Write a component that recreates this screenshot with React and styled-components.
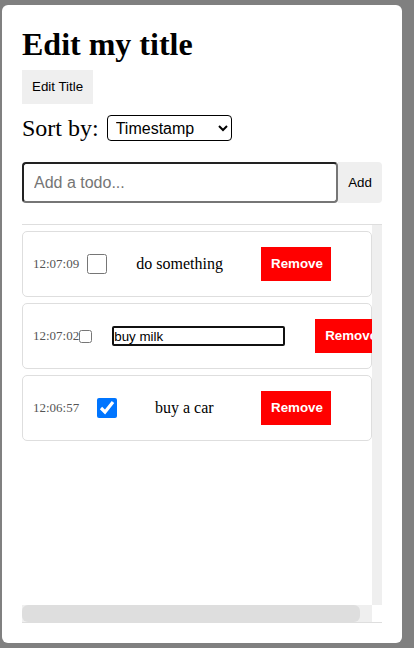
import React, { useState } from "react";
import styled, { createGlobalStyle } from "styled-components";

const GlobalStyle = createGlobalStyle`
  html, body {
    margin: 0;
    padding: 0;
    background: #808080;
  }
  body {
    padding: 5px 0 5px 2px;
    font-family: "Liberation Serif", "Times New Roman", serif;
  }
`;

const Card = styled.div`
  box-sizing: border-box;
  width: 400px;
  height: 638px;
  background: white;
  border-radius: 6px;
  padding: 21px 20px 20px;
  display: flex;
  flex-direction: column;
`;

const Title = styled.h1`
  margin: 0 0 7px;
  font-size: 32px;
  font-weight: bold;
  line-height: 37px;
`;

const GrayButton = styled.button`
  align-self: flex-start;
  border: none;
  background: #efefef;
  font-family: "Liberation Sans", Arial, sans-serif;
  font-size: 13.33px;
  line-height: 14px;
  padding: 10px;
  color: black;
  border-radius: ${(p) => (p.$attached ? "0 4px 4px 0" : "0")};
`;

const SortRow = styled.div`
  display: flex;
  align-items: center;
  gap: 8px;
  margin-top: 10px;
  font-size: 24px;
  line-height: 28px;
`;

const SortSelect = styled.select`
  width: 125px;
  height: 26px;
  font-family: "Liberation Sans", Arial, sans-serif;
  font-size: 16px;
  border: 1px solid black;
  border-radius: 4px;
  background: white;
  color: black;
  padding: 0 4px;
`;

const AddForm = styled.div`
  display: flex;
  margin-top: 20px;
  margin-bottom: 21px;
`;

const TodoInput = styled.input`
  box-sizing: border-box;
  width: 316px;
  height: 41px;
  border-style: solid;
  border-width: 2px;
  border-color: #222 #767676 #767676 #222;
  border-radius: 4px;
  padding: 0 10px;
  font-family: "Liberation Sans", Arial, sans-serif;
  font-size: 16px;
  outline: none;
  &::placeholder {
    color: #757575;
  }
`;

const AddButton = styled(GrayButton)`
  height: 41px;
  width: 44px;
  padding: 0;
  text-align: center;
`;

/* list frame: viewport + vertical track, horizontal bar underneath */
const ListFrame = styled.div`
  box-sizing: border-box;
  height: 400px;
  border-top: 1px solid #dedede;
  border-bottom: 1px solid #dedede;
  display: grid;
  grid-template-columns: 1fr 10px;
  grid-template-rows: 1fr 17px;
`;

const Viewport = styled.div`
  overflow: hidden;
  padding-top: 6px;
  min-width: 0;
`;

const VTrack = styled.div`
  background: #efefef;
`;

const HTrack = styled.div`
  background: #efefef;
  display: flex;
`;

const HThumb = styled.div`
  background: #dedede;
  border-radius: 6px;
`;

const Corner = styled.div`
  background: white;
`;

const Item = styled.div`
  box-sizing: border-box;
  height: 66px;
  display: flex;
  align-items: center;
  justify-content: space-between;
  padding: 0 40px 0 10px;
  border: 1px solid #dedede;
  border-radius: 5px;
  margin-bottom: 6px;
`;

const Stamp = styled.span`
  font-size: 13px;
  color: #555;
  flex-shrink: 0;
`;

const Check = styled.input`
  margin: 0;
  flex-shrink: 0;
  width: ${(p) => (p.$small ? "13px" : "20px")};
  height: ${(p) => (p.$small ? "13px" : "20px")};
  accent-color: #0075ff;
`;

const ItemText = styled.span`
  font-size: 16px;
  margin: 0 9px 0 21px;
  flex-shrink: 0;
  white-space: nowrap;
`;

const EditInput = styled.input`
  box-sizing: border-box;
  flex-shrink: 0;
  width: 173px;
  height: 20px;
  margin: 0 9px 0 20px;
  border: 2px solid #111;
  border-radius: 2px;
  padding: 0;
  font-family: "Liberation Sans", Arial, sans-serif;
  font-size: 13.33px;
  outline: none;
`;

const RemoveButton = styled.button`
  flex-shrink: 0;
  margin-left: 21px;
  border: none;
  background: red;
  color: white;
  font-family: "Liberation Sans", Arial, sans-serif;
  font-size: 13.33px;
  font-weight: 600;
  line-height: 14px;
  padding: 10px;
  width: 70px;
`;

const initialTodos = [
  { id: 1, time: "12:07:09", text: "do something", done: false, editing: false },
  { id: 2, time: "12:07:02", text: "buy milk", done: false, editing: true },
  { id: 3, time: "12:06:57", text: "buy a car", done: true, editing: false },
];

function TodoItem({ todo, onToggle, onRemove }) {
  return (
    <Item>
      <Stamp>{todo.time}</Stamp>
      <Check
        type="checkbox"
        $small={todo.editing}
        checked={todo.done}
        onChange={() => onToggle(todo.id)}
      />
      {todo.editing ? (
        <EditInput defaultValue={todo.text} />
      ) : (
        <ItemText>{todo.text}</ItemText>
      )}
      <RemoveButton onClick={() => onRemove(todo.id)}>Remove</RemoveButton>
    </Item>
  );
}

export default function App() {
  const [todos, setTodos] = useState(initialTodos);

  const toggle = (id) =>
    setTodos(todos.map((t) => (t.id === id ? { ...t, done: !t.done } : t)));
  const remove = (id) => setTodos(todos.filter((t) => t.id !== id));

  return (
    <>
      <GlobalStyle />
      <Card>
        <Title>Edit my title</Title>
        <GrayButton>Edit Title</GrayButton>
        <SortRow>
          <span>Sort by:</span>
          <SortSelect defaultValue="timestamp">
            <option value="timestamp">Timestamp</option>
            <option value="name">Name</option>
          </SortSelect>
        </SortRow>
        <AddForm>
          <TodoInput placeholder="Add a todo..." />
          <AddButton $attached>Add</AddButton>
        </AddForm>
        <ListFrame>
          <Viewport>
            {todos.map((t) => (
              <TodoItem key={t.id} todo={t} onToggle={toggle} onRemove={remove} />
            ))}
          </Viewport>
          <VTrack />
          <HTrack>
            <HThumb style={{ width: `${(338 / 350) * 100}%` }} />
          </HTrack>
          <Corner />
        </ListFrame>
      </Card>
    </>
  );
}
